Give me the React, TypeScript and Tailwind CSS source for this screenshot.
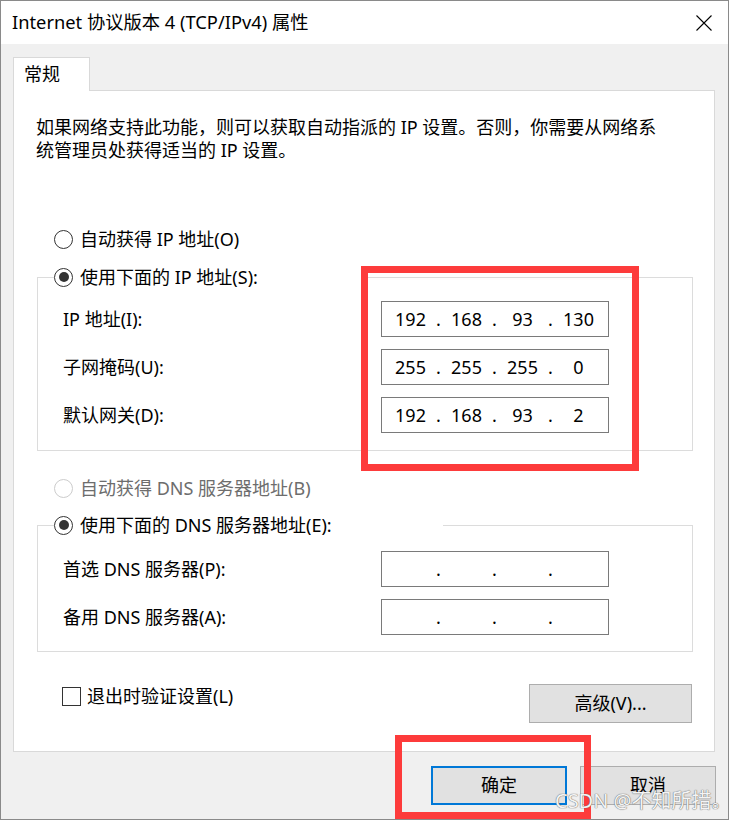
import React from "react";

function Radio({ checked, disabled }: { checked?: boolean; disabled?: boolean }) {
  return (
    <span
      className={
        "flex h-[19px] w-[19px] shrink-0 items-center justify-center rounded-full border bg-white " +
        (disabled ? "border-[#cccccc]" : "border-[#333333]")
      }
    >
      {checked ? <span className="block h-[10px] w-[10px] rounded-full bg-[#333333]" /> : null}
    </span>
  );
}

function IpBox({ parts }: { parts: string[] }) {
  return (
    <div className="flex h-[36px] w-[228px] items-center border border-[#7a7a7a] bg-white pl-[3px] leading-none">
      {parts.map((p, i) => (
        <React.Fragment key={i}>
          <span className="w-[51px] text-center">{p}</span>
          {i < 3 ? <span className="w-[5px] text-center">.</span> : null}
        </React.Fragment>
      ))}
    </div>
  );
}

export default function App() {
  return (
    <div className="relative h-[820px] w-[729px] overflow-hidden border border-[#8a8a8a] bg-[#f0f0f0] font-['Noto_Sans','Noto_Sans_CJK_SC',sans-serif] text-[18px] text-black">
      {/* title bar */}
      <div className="flex h-[43px] items-center justify-between bg-white pl-[11px] pr-[16px]">
        <span className="text-[18.3px] leading-none">Internet 协议版本 4 (TCP/IPv4) 属性</span>
        <svg width="16" height="16" viewBox="0 0 16 16" className="block">
          <path d="M0.5 0.5 L15.5 15.5 M15.5 0.5 L0.5 15.5" stroke="#000" strokeWidth="1.1" fill="none" />
        </svg>
      </div>

      {/* body */}
      <div className="px-[12px] pt-[13px]">
        <div className="relative z-10 -mb-px flex h-[34px] w-[77px] items-center border border-b-0 border-[#d9d9d9] bg-white pl-[10px]">
          常规
        </div>
        <div className="h-[662px] w-[702px] border border-[#d9d9d9] bg-white pl-[22px] pt-[25px]">
          <p className="whitespace-nowrap leading-[23px]">
            如果网络支持此功能，则可以获取自动指派的 IP 设置。否则，你需要从网络系
            <br />
            统管理员处获得适当的 IP 设置。
          </p>

          <div className="ml-[18px] mt-[65px] flex h-[24px] items-center gap-[7px]">
            <Radio />
            <span>自动获得 IP 地址(O)</span>
          </div>

          <fieldset className="ml-[1px] mt-[14px] w-[656px] border border-[#dcdcdc] pb-[17px] pt-[12px]">
            <legend className="ml-[16px] w-[308px] p-0">
              <div className="flex h-[24px] items-center gap-[7px]">
                <Radio checked />
                <span>使用下面的 IP 地址(S):</span>
              </div>
            </legend>
            <div className="grid grid-cols-[318px_228px] items-center gap-y-[12px] pl-[25px]">
              <span>IP 地址(I):</span>
              <IpBox parts={["192", "168", "93", "130"]} />
              <span>子网掩码(U):</span>
              <IpBox parts={["255", "255", "255", "0"]} />
              <span>默认网关(D):</span>
              <IpBox parts={["192", "168", "93", "2"]} />
            </div>
          </fieldset>

          <div className="ml-[18px] mt-[25px] flex h-[24px] items-center gap-[7px] text-[#6d6d6d]">
            <Radio disabled />
            <span>自动获得 DNS 服务器地址(B)</span>
          </div>

          <fieldset className="ml-[1px] mt-[13px] w-[656px] border border-[#dcdcdc] pb-[16px] pt-[14px]">
            <legend className="ml-[16px] w-[389px] p-0">
              <div className="flex h-[24px] items-center gap-[7px]">
                <Radio checked />
                <span>使用下面的 DNS 服务器地址(E):</span>
              </div>
            </legend>
            <div className="grid grid-cols-[318px_228px] items-center gap-y-[12px] pl-[25px]">
              <span>首选 DNS 服务器(P):</span>
              <IpBox parts={["", "", "", ""]} />
              <span>备用 DNS 服务器(A):</span>
              <IpBox parts={["", "", "", ""]} />
            </div>
          </fieldset>

          <div className="ml-[26px] mr-[22px] mt-[32px] flex items-start justify-between">
            <div className="flex h-[24px] items-center gap-[6px]">
              <span className="block h-[19px] w-[19px] border border-[#333333] bg-white" />
              <span>退出时验证设置(L)</span>
            </div>
            <div className="flex h-[39px] w-[163px] items-center justify-center border border-[#adadad] bg-[#e1e1e1]">
              高级(V)...
            </div>
          </div>
        </div>

        {/* footer */}
        <div className="mt-[14px] flex justify-end gap-[13px]">
          <div className="flex h-[39px] w-[136px] items-center justify-center border-2 border-[#0078d7] bg-[#e1e1e1]">
            确定
          </div>
          <div className="flex h-[39px] w-[136px] items-center justify-center border border-[#adadad] bg-[#e1e1e1]">
            取消
          </div>
        </div>
      </div>

      {/* annotations */}
      <div className="absolute left-[360px] top-[265px] h-[205px] w-[278px] border-[7px] border-[#fd3b3b]" />
      <div className="absolute left-[394px] top-[734px] h-[84px] w-[196px] border-[7px] border-[#fd3b3b]" />
      <div className="absolute left-[554px] top-[786px] whitespace-nowrap text-[20px] leading-[28px] text-[#f4f4f4] [text-shadow:0_0_1px_#6a6a6a,0_0_1px_#6a6a6a]">
        CSDN @不知所措。
      </div>
    </div>
  );
}
